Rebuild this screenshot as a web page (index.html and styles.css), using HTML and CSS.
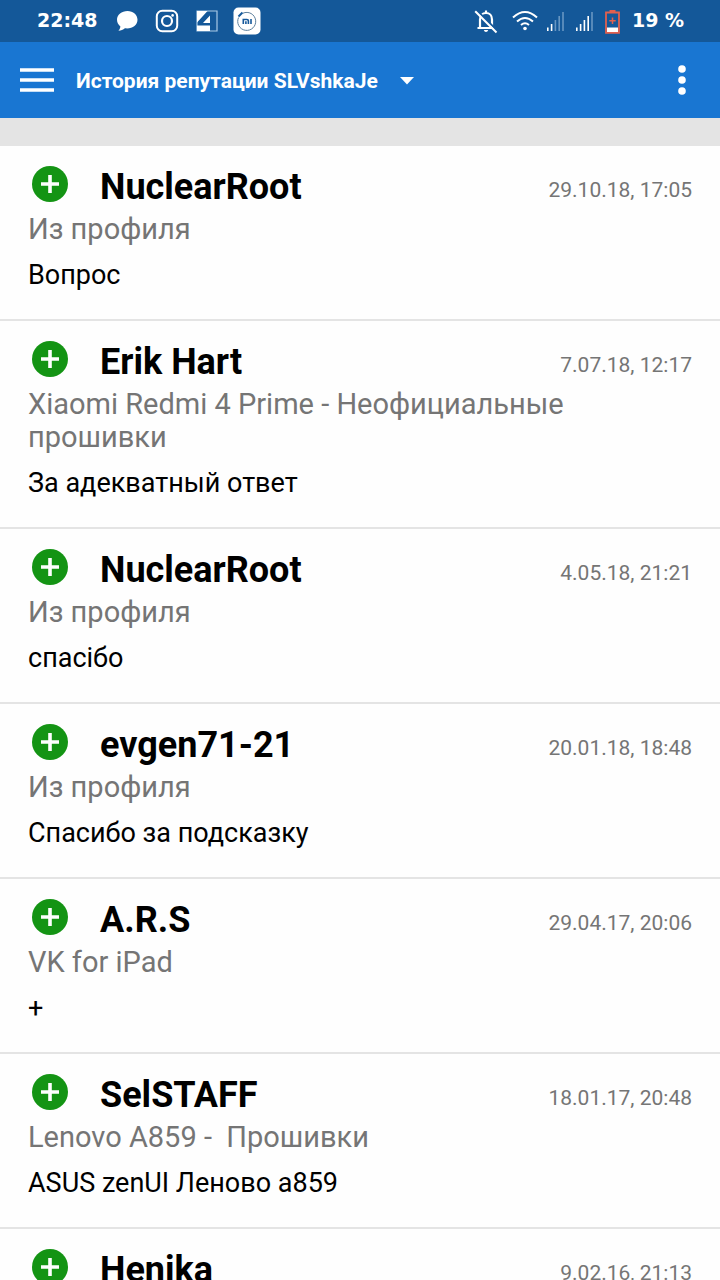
FILE: index.html
```html
<!DOCTYPE html>
<html lang="ru">
<head>
<meta charset="utf-8">
<meta name="viewport" content="width=device-width, initial-scale=1">
<title>История репутации SLVshkaJe</title>
<link rel="stylesheet" href="styles.css">
</head>
<body>
<svg class="sprite" aria-hidden="true">
  <symbol id="plus" viewBox="0 0 36 36">
    <circle cx="18" cy="18" r="18" fill="#149414"/>
    <path d="M18 9v18M9 18h18" stroke="#fff" stroke-width="3.6" fill="none"/>
  </symbol>
</svg>
<div class="app">
  <div class="status">
    <div class="status-left">
      <span class="clock">22:48</span>
      <svg width="22" height="22" viewBox="0 0 22 22"><path d="M11.500 1C5.700 1 1 4.800 1 9.800c0 2.700 1.300 5 3.400 6.600-.2 1.700-1 3.300-2 4.400 2.500-.1 4.900-1.100 6.500-2.500 7 1 12.600-3 12.600-8.500C21.500 4.800 17.200 1 11.500 1z" fill="#fff"/></svg>
      <svg width="24" height="24" viewBox="0 0 24 24" fill="none" stroke="#fff"><rect x="1.800" y="1.800" width="20.400" height="20.400" rx="5.500" stroke-width="2"/><circle cx="12" cy="12" r="5" stroke-width="2.200"/><circle cx="17.600" cy="6.400" r="1.300" fill="#fff" stroke="none"/></svg>
      <svg width="22" height="22" viewBox="0 0 22 22"><path d="M1 1h20v20H1z" fill="none" stroke="#a9c9e6" stroke-width="1.200"/><path d="M1 1h10.500L1 12.500zM14 5.500V13H7zM1 15.500h13V21H1z" fill="#fff"/></svg>
      <svg class="mi" width="28" height="28" viewBox="0 0 28 28"><rect x=".5" y=".5" width="27" height="27" rx="5" fill="#fff"/><path d="M10 6.200A9 9 0 1 1 5.600 10.500" fill="none" stroke="#5c7f9d" stroke-width="1"/><path d="M5.500 9.500l4-4" stroke="#16599b" stroke-width="2"/><path d="M10.300 17v-4.500h3.600q1.500 0 1.500 1.200V17M12.900 14.200V17M18 12V17" fill="none" stroke="#16599b" stroke-width="1.600"/></svg>
    </div>
    <div class="status-right">
      <svg width="24" height="26" viewBox="0 0 24 26" fill="none" stroke="#fff"><path d="M6 19V11.500C6 7.500 8.500 5 12 5s6 2.500 6 6.500V19M3.500 20h17M12 5V2.500" stroke-width="2.200"/><path d="M9.800 22h4.400q-.5 2-2.200 2t-2.200-2z" fill="#fff" stroke="none"/><path d="M3 2.500L23.500 23" stroke="#16599b" stroke-width="2"/><path d="M1.200 3.200L22.500 24.500" stroke-width="2"/></svg>
      <svg class="wifi" width="26" height="22" viewBox="0 0 26 22" fill="none" stroke="#fff" stroke-width="2"><path d="M1 7.500Q13-3.500 25 7.500M5 11.500q8-7 16 0M9 15q4-3.400 8 0"/><circle cx="13" cy="18.500" r="1.800" fill="#fff" stroke="none"/></svg>
      <svg class="signal" width="18" height="20" viewBox="0 0 18 20"><path d="M1 16.500h1.600V20H1zM4.800 13h1.600v7H4.800z" fill="#fff"/><path d="M8.600 9h1.600v11H8.600zM12.400 5H14v15h-1.600zM16.200 1h1.600v19h-1.600z" fill="#6796c2"/></svg>
      <svg class="signal second" width="18" height="20" viewBox="0 0 18 20"><path d="M1 16.500h1.600V20H1zM4.800 13h1.600v7H4.800zM8.600 9h1.600v11H8.600zM12.400 5H14v15h-1.600z" fill="#fff"/><path d="M16.200 1h1.600v19h-1.600z" fill="#6796c2"/></svg>
      <svg class="battery" width="15" height="25" viewBox="0 0 15 25"><path d="M1 3.500h13v20.300H1z" fill="none" stroke="#e2604f" stroke-width="1.800"/><path d="M4.500 1h6v2h-6z" fill="#e2604f"/><path d="M2 18.500h11V23H2z" fill="#fff"/><path d="M7.500 8.500v6.400M4.300 11.700h6.400" stroke="#e2604f" stroke-width="1.500"/></svg>
      <span class="clock">19 %</span>
    </div>
  </div>
  <header class="bar">
    <button class="icon-button" aria-label="Меню"><svg width="34" height="24" viewBox="0 0 34 24"><path d="M0 2h34M0 12h34M0 22h34" stroke="#fff" stroke-width="3.600"/></svg></button>
    <button class="title">История репутации SLVshkaJe <svg width="14" height="8" viewBox="0 0 14 8"><path d="M0 0h14L7 7.500z" fill="#fff"/></svg></button>
    <button class="icon-button more" aria-label="Ещё"><svg width="8" height="30" viewBox="0 0 8 30" fill="#fff"><circle cx="4" cy="4" r="3.800"/><circle cx="4" cy="15" r="3.800"/><circle cx="4" cy="26" r="3.800"/></svg></button>
  </header>
  <main class="list">
    <article class="entry">
      <div class="head"><svg class="plus"><use href="#plus"/></svg><h2 class="name">NuclearRoot</h2><time class="date">29.10.18, 17:05</time></div>
      <p class="topic">Из профиля</p>
      <p class="comment">Вопрос</p>
    </article>
    <article class="entry">
      <div class="head"><svg class="plus"><use href="#plus"/></svg><h2 class="name">Erik Hart</h2><time class="date">7.07.18, 12:17</time></div>
      <p class="topic">Xiaomi Redmi 4 Prime - Неофициальные прошивки</p>
      <p class="comment">За адекватный ответ</p>
    </article>
    <article class="entry">
      <div class="head"><svg class="plus"><use href="#plus"/></svg><h2 class="name">NuclearRoot</h2><time class="date">4.05.18, 21:21</time></div>
      <p class="topic">Из профиля</p>
      <p class="comment">спасібо</p>
    </article>
    <article class="entry">
      <div class="head"><svg class="plus"><use href="#plus"/></svg><h2 class="name">evgen71-21</h2><time class="date">20.01.18, 18:48</time></div>
      <p class="topic">Из профиля</p>
      <p class="comment">Спасибо за подсказку</p>
    </article>
    <article class="entry">
      <div class="head"><svg class="plus"><use href="#plus"/></svg><h2 class="name">A.R.S</h2><time class="date">29.04.17, 20:06</time></div>
      <p class="topic">VK for iPad</p>
      <p class="comment">+</p>
    </article>
    <article class="entry">
      <div class="head"><svg class="plus"><use href="#plus"/></svg><h2 class="name">SelSTAFF</h2><time class="date">18.01.17, 20:48</time></div>
      <p class="topic">Lenovo A859 -  Прошивки</p>
      <p class="comment">ASUS zenUI Леново a859</p>
    </article>
    <article class="entry">
      <div class="head"><svg class="plus"><use href="#plus"/></svg><h2 class="name">Henika</h2><time class="date">9.02.16, 21:13</time></div>
    </article>
  </main>
</div>
</body>
</html>
```
FILE: styles.css
```css
* {
  box-sizing: border-box;
}

body {
  margin: 0;
  background: #fefefe;
  color: #000;
  font-family: Roboto, "Noto Sans", sans-serif;
}

.sprite {
  position: absolute;
  width: 0;
  height: 0;
}

.app {
  display: flex;
  flex-direction: column;
  height: 100vh;
  overflow: hidden;
}

.status {
  display: flex;
  flex: none;
  justify-content: space-between;
  align-items: center;
  height: 42px;
  padding: 0 36px 0 37px;
  background: #145899;
}

.status-left,
.status-right {
  display: flex;
  align-items: center;
}

.status-left {
  gap: 17px;
}

.status-right {
  gap: 12px;
}

.status-left .clock {
  margin-right: 2px;
}

.mi {
  margin-left: -2px;
}

.wifi {
  margin-left: 2px;
}

.signal {
  margin-left: -4px;
}

.second {
  margin-left: -1px;
}

.clock {
  color: #fff;
  font: bold 19px/40px "DejaVu Sans", sans-serif;
  padding-bottom: 2px;
}

.bar {
  display: flex;
  flex: none;
  align-items: center;
  height: 76px;
  padding: 0 34px 0 20px;
  background: #1976d2;
}

.icon-button,
.title {
  display: flex;
  align-items: center;
  padding: 0;
  border: 0;
  background: none;
  color: #fff;
}

.title {
  gap: 22px;
  margin: 2px 0 0 22px;
  font: bold 21px/28px Roboto, "Noto Sans", sans-serif;
}

.more {
  margin-left: auto;
}

.list {
  flex: 1;
  min-height: 0;
  overflow: hidden;
  border-top: 28px solid #e4e4e4;
}

.entry {
  padding: 20px 28px 28px;
  border-bottom: 2px solid #e4e4e4;
}

.head {
  display: flex;
  align-items: flex-start;
  padding-left: 4px;
}

.plus {
  width: 36px;
  height: 36px;
}

.name {
  flex: 1;
  margin: 0 0 5px 32px;
  font-size: 36px;
  font-weight: 700;
  line-height: 42px;
}

.date {
  margin-top: 10px;
  color: #757575;
  font-size: 21px;
  line-height: 28px;
}

.topic {
  max-width: 600px;
  margin: 0;
  color: #757575;
  font-size: 29px;
  line-height: 33px;
  white-space: pre-wrap;
}

.comment {
  margin: 14px 0 0;
  font-size: 27px;
  line-height: 31px;
}
```
